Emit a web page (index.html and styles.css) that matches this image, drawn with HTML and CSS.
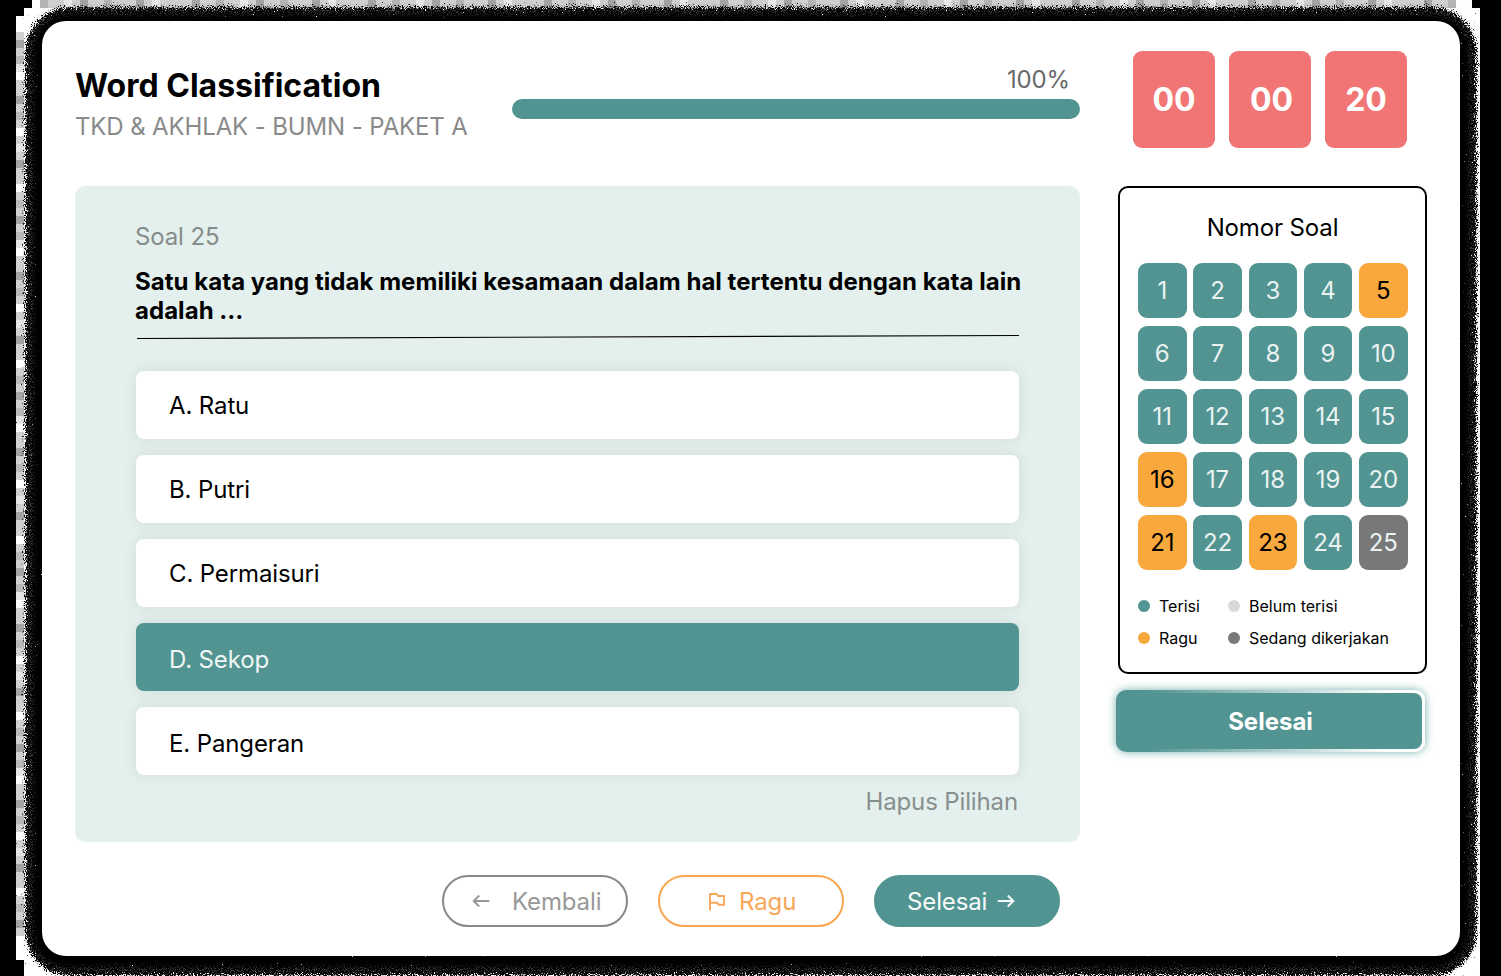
FILE: index.html
```html
<!DOCTYPE html>
<html lang="id">
<head>
<meta charset="utf-8">
<title>Word Classification</title>
<link rel="stylesheet" href="styles.css">
</head>
<body>
<svg class="backdrop" width="1501" height="976" viewBox="0 0 1501 976" aria-hidden="true">
  <defs>
    <pattern id="stripV" width="8" height="176" patternUnits="userSpaceOnUse" x="16">
      <rect width="8" height="176" fill="#d0d0d0"/>
      <path d="M0 8h8v8h-8zM0 72h8v8h-8zM0 128h8v8h-8z" fill="#fff"/>
      <path d="M0 40h8v8h-8zM0 96h8v8h-8zM0 160h8v8h-8z" fill="#a4a4a4"/>
      <path d="M0 24h8v8h-8zM0 56h8v8h-8zM0 112h8v8h-8z" fill="#b9b9b9"/>
      <path d="M0 64h8v8h-8zM0 144h8v8h-8z" fill="#e6e6e6"/>
    </pattern>
    <pattern id="stripH" width="176" height="8" patternUnits="userSpaceOnUse">
      <rect width="176" height="8" fill="#cfcfcf"/>
      <path d="M16 0h8v8h-8zM80 0h8v8h-8zM136 0h8v8h-8z" fill="#a4a4a4"/>
      <path d="M40 0h8v8h-8zM104 0h8v8h-8z" fill="#b4b4b4"/>
      <path d="M64 0h8v8h-8zM152 0h8v8h-8z" fill="#e8e8e8"/>
    </pattern>
    <filter id="grain" filterUnits="userSpaceOnUse" x="0" y="0" width="1501" height="976" color-interpolation-filters="sRGB">
      <feGaussianBlur in="SourceAlpha" stdDeviation="3" result="soft"/>
      <feTurbulence type="fractalNoise" baseFrequency="0.9" numOctaves="2" seed="4"/>
      <feColorMatrix values="0 0 0 0 0  0 0 0 0 0  0 0 0 0 0  1 0 0 0 0" result="noise"/>
      <feComposite in="soft" in2="noise" operator="arithmetic" k1="0" k2="1" k3="1.5" k4="-0.75"/>
      <feComponentTransfer><feFuncA type="linear" slope="8" intercept="-3.5"/></feComponentTransfer>
    </filter>
    <filter id="specks" filterUnits="userSpaceOnUse" x="0" y="0" width="1501" height="976" color-interpolation-filters="sRGB">
      <feGaussianBlur in="SourceAlpha" stdDeviation="2.5" result="soft"/>
      <feTurbulence type="fractalNoise" baseFrequency="0.85" numOctaves="2" seed="9"/>
      <feColorMatrix values="0 0 0 0 .27  0 0 0 0 .27  0 0 0 0 .27  8 0 0 0 -4"/>
      <feComposite in2="soft" operator="in"/>
    </filter>
  </defs>
  <rect width="1501" height="976" fill="#000"/>
  <path d="M32 0H1472V8H1480V976H24V960H16V16H24V8H32z" fill="#fff"/>
  <rect x="16" y="32" width="8" height="904" fill="url(#stripV)"/>
  <rect x="40" y="0" width="1416" height="8" fill="url(#stripH)"/>
  <rect x="25.5" y="7.5" width="1451" height="968" rx="44" filter="url(#grain)"/>
  <rect x="30" y="11" width="1442" height="959" rx="38" fill="none" stroke="#000" stroke-width="7" filter="url(#specks)"/>
</svg>

<div class="screen">
  <header class="header">
    <div class="heading">
      <h1 class="title">Word Classification</h1>
      <p class="subtitle">TKD &amp; AKHLAK - BUMN - PAKET A</p>
    </div>
    <div class="progress">
      <span class="progress-label">100%</span>
      <div class="progress-bar"></div>
    </div>
    <div class="timer"><span>00</span><span class="minutes">00</span><span>20</span></div>
  </header>

  <div class="content">
    <main class="main">
      <section class="question">
        <p class="question-number">Soal 25</p>
        <h2 class="question-text">Satu kata yang tidak memiliki kesamaan dalam hal tertentu dengan kata lain adalah …</h2>
        <svg class="divider" width="884" height="6" viewBox="0 0 884 6"><path d="M2 4.5L884 1.5" stroke="#000" stroke-width="1.1"/></svg>
        <div class="options">
          <div class="option">A. Ratu</div>
          <div class="option">B. Putri</div>
          <div class="option">C. Permaisuri</div>
          <div class="option selected">D. Sekop</div>
          <div class="option low">E. Pangeran</div>
        </div>
        <p class="clear">Hapus Pilihan</p>
      </section>
      <nav class="actions">
        <button class="pill back">
          <svg width="18" height="14" viewBox="0 0 18 14" fill="none" stroke="currentColor" stroke-width="1.9"><path d="M17.3 7H2M7.2 1.5L1.7 7l5.5 5.5"/></svg>
          <span>Kembali</span>
        </button>
        <button class="pill doubt">
          <svg width="18" height="19" viewBox="0 0 18 19" fill="none" stroke="currentColor" stroke-width="1.9"><path d="M2 18.5V2h6.8l1.3 2H16v8.7H10.5l-1.3-2H2"/></svg>
          <span>Ragu</span>
        </button>
        <button class="pill done">
          <span>Selesai</span>
          <svg width="18" height="14" viewBox="0 0 18 14" fill="none" stroke="currentColor" stroke-width="2"><path d="M.7 7H16M10.8 1.5L16.3 7l-5.5 5.5"/></svg>
        </button>
      </nav>
    </main>

    <aside class="sidebar">
      <section class="numbers">
        <h3 class="numbers-title">Nomor Soal</h3>
        <div class="grid">
          <span>1</span><span>2</span><span>3</span><span>4</span><span class="ragu">5</span>
          <span>6</span><span>7</span><span>8</span><span>9</span><span>10</span>
          <span>11</span><span>12</span><span>13</span><span>14</span><span>15</span>
          <span class="ragu">16</span><span>17</span><span>18</span><span>19</span><span>20</span>
          <span class="ragu">21</span><span>22</span><span class="ragu">23</span><span>24</span><span class="current">25</span>
        </div>
        <div class="legend">
          <span class="key"><i class="dot teal"></i>Terisi</span>
          <span class="key"><i class="dot light"></i>Belum terisi</span>
          <span class="key"><i class="dot orange"></i>Ragu</span>
          <span class="key"><i class="dot gray"></i>Sedang dikerjakan</span>
        </div>
      </section>
      <button class="finish"><span>Selesai</span></button>
    </aside>
  </div>
</div>
</body>
</html>
```
FILE: styles.css
```css
* { box-sizing: border-box; }

body {
  margin: 0;
  width: 1501px;
  height: 976px;
  overflow: hidden;
  padding: 21px 41px 20px 42px;
  background: #000;
  font-family: Inter, "Liberation Sans", sans-serif;
  font-size: 24px;
  font-weight: 400;
  letter-spacing: -.13px;
  color: #000;
}

h1, h2, h3, p { margin: 0; }
button { font: inherit; letter-spacing: inherit; padding: 0; }
svg { display: block; flex: none; }

.backdrop { position: absolute; left: 0; top: 0; }

.screen {
  position: relative;
  height: 935px;
  padding: 30px 33px 0;
  border-radius: 24px;
  background: #fff;
}

.header { display: flex; height: 97px; }
.heading { width: 437px; padding-top: 15px; }
.title { font-size: 32px; line-height: 39px; font-weight: 700; letter-spacing: 0; white-space: nowrap; }
.subtitle { margin-top: 7px; line-height: 29px; color: #8a8a8a; white-space: nowrap; }

.progress { width: 568px; padding-top: 14px; text-align: right; }
.progress-label { display: block; padding-right: 10px; line-height: 29px; color: #696969; }
.progress-bar { height: 20px; margin-top: 5px; border-radius: 10px; background: #519491; }

.timer { display: flex; gap: 14px; margin-left: 53px; letter-spacing: 0; }
.timer span {
  width: 82px;
  border-radius: 9px;
  background: #f07574;
  color: #fff;
  font-size: 32px;
  font-weight: 700;
  line-height: 98px;
  height: 97px;
  text-align: center;
}
.timer .minutes { padding-left: 3px; }

.content { display: flex; gap: 38px; margin-top: 38px; }
.main { width: 1005px; }

.question { height: 656px; padding: 36px 60px 0; border-radius: 10px; background: #e4f0ed; }
.question-number { line-height: 29px; color: #858d8b; }
.question-text { margin-top: 16px; font-size: 24px; line-height: 29px; font-weight: 700; letter-spacing: .04px; width: 900px; }
.divider { margin-top: 9px; }

.options { display: grid; gap: 16px; margin: 31px 1px 0; }
.option {
  height: 68px;
  padding-left: 33px;
  border-radius: 8px;
  background: #fff;
  box-shadow: 0 0 14px rgba(60, 90, 80, .12);
  line-height: 69px;
}
.option.low { line-height: 73px; }
.option.selected { background: #519491; color: #f0f6f5; line-height: 73px; }
.clear { margin-top: 12px; padding-right: 2px; line-height: 29px; color: #878f8d; text-align: right; }

.actions { display: flex; gap: 30px; margin: 33px 0 0 367px; }
.pill {
  display: flex;
  align-items: center;
  width: 186px;
  height: 52px;
  border: 2px solid;
  border-radius: 26px;
  background: none;
}
.back { padding-left: 28px; gap: 22px; color: #989898; border-color: #888; }
.doubt { padding-left: 48px; gap: 13px; color: #f6a75a; border-color: #f8a650; }
.done { padding-left: 31px; gap: 10px; color: #f6fafa; background: #519491; border-color: #519491; }

.sidebar { width: 309px; }
.numbers { height: 488px; padding: 25px 17px 0 18px; border: 2px solid #000; border-radius: 10px; }
.numbers-title { font-size: 24px; line-height: 29px; font-weight: 400; text-align: center; padding-right: 1px; }
.grid { display: grid; grid-template-columns: repeat(5, 48.5px); gap: 8px 6.75px; margin-top: 21px; }
.grid span {
  height: 55px;
  border-radius: 9px;
  background: #519491;
  color: #eaf2f1;
  line-height: 55px;
  text-align: center;
}
.grid .ragu { background: #f8a83c; color: #000; }
.grid .current { background: #787878; }

.legend { display: grid; grid-template-columns: 90px 1fr; row-gap: 12px; margin-top: 26px; font-size: 16px; letter-spacing: 0; line-height: 20px; white-space: nowrap; }
.key { display: flex; align-items: center; gap: 9px; }
.dot { width: 12px; height: 12px; border-radius: 50%; }
.teal { background: #519491; }
.light { background: #d9d9d9; }
.orange { background: #f3a73c; }
.gray { background: #787878; }

.finish {
  display: block;
  width: 309px;
  height: 62px;
  margin: 16px 0 0 -2px;
  padding: 3px 3px 3px 0;
  border: 0;
  border-radius: 10px;
  background: linear-gradient(90deg, #519491 10%, #b9d4d3 55%, #fff 88%);
  box-shadow: 0 0 8px rgba(70, 148, 142, .75);
}
.finish span {
  display: block;
  height: 56px;
  border-radius: 8px;
  background: #519491;
  color: #fff;
  font-weight: 700;
  letter-spacing: 0;
  line-height: 57px;
  padding-left: 3px;
}
```
